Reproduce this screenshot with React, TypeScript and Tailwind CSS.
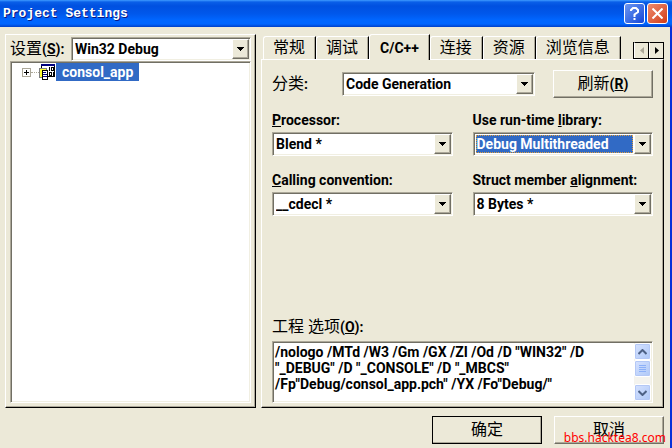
import React, { useState } from "react";

const sunken =
  "border border-t-[#aca899] border-l-[#aca899] border-b-white border-r-white bg-white p-px shadow-[inset_1px_1px_0_#716f64,inset_-1px_-1px_0_#f1efe2]";
const raised =
  "border border-t-white border-l-white border-b-[#716f64] border-r-[#716f64] bg-[#ece9d8] shadow-[inset_-1px_-1px_0_#aca899]";
const cjk = "text-base leading-6 font-normal";
const spinner =
  "flex h-4 w-[15px] items-center justify-center border-t border-l border-t-black border-l-white bg-[#ece9d8] border-r border-r-black";

function Combo({
  id,
  options,
  focused = false,
}: {
  id: string;
  options: string[];
  focused?: boolean;
}) {
  return (
    <div className={`relative flex h-6 min-w-0 flex-1 ${sunken}`}>
      <select
        id={id}
        className={`m-px min-w-0 flex-1 appearance-none text-sm leading-4 outline-none ${
          focused
            ? "border border-dotted border-[#e0a040] bg-[#316ac5] text-white"
            : "bg-white pl-px"
        }`}
      >
        {options.map((o) => (
          <option key={o}>{o}</option>
        ))}
      </select>
      <span className={`pointer-events-none flex w-[17px] items-center justify-center ${raised}`}>
        <svg width="7" height="4" viewBox="0 0 7 4" shapeRendering="crispEdges">
          <path d="M0 0h7v1H6v1H5v1H4v1H3V3H2V2H1V1H0z" />
        </svg>
      </span>
    </div>
  );
}

function Tab({
  label,
  active,
  onSelect,
}: {
  label: string;
  active: boolean;
  onSelect: () => void;
}) {
  return (
    <button
      type="button"
      role="tab"
      aria-selected={active}
      onClick={onSelect}
      className={`rounded-tl-[3px] border-t border-l border-r border-t-white border-l-white border-r-black whitespace-nowrap shadow-[inset_-1px_0_0_#aca899] ${
        active
          ? "relative -mb-px h-[26px] bg-[#ece9d8] px-2.5 text-sm font-bold"
          : "h-[23px] pr-2.5 pb-px pl-[9px] text-base leading-5 font-normal"
      }`}
    >
      {label}
    </button>
  );
}

function ScrollButton({ label, children }: { label: string; children: React.ReactNode }) {
  return (
    <button
      type="button"
      aria-label={label}
      className="flex h-[17px] w-full items-center justify-center rounded-xs border border-white bg-linear-to-br from-[#d6e2ff] to-[#aec8f7] shadow-[inset_0_0_0_1px_#b4c8f6]"
    >
      {children}
    </button>
  );
}

function ProjectIcon() {
  return (
    <svg width="16" height="16" viewBox="0 0 16 16" shapeRendering="crispEdges">
      <path d="M2 0h14v13H2z" fill="#000" />
      <path d="M3 2h12v10H3z" fill="#fff" />
      <path d="M2 0h14v2H2z" fill="#000080" />
      <path d="M0 4h8v10H0z" fill="#808080" />
      <path d="M1 5h6v8H1z" fill="#ffff33" />
      <path d="M3 6h6v10H3z" fill="#000" />
      <path d="M4 7h4v8H4z" fill="#fff" />
      <path d="M4 8h3v1H4zM4 10h4v1H4zM4 12h4v1H4z" fill="#000080" />
      <path d="M10 3h1v4h-1zM12 3h3v4h-3zM13 4v2h1V4zM10 8h3v4h-3zM11 9v2h1V9zM14 8h1v4h-1z" fillRule="evenodd" />
    </svg>
  );
}

const tabs = ["常规", "调试", "C/C++", "连接", "资源", "浏览信息"];

const initialOptions = `/nologo /MTd /W3 /Gm /GX /ZI /Od /D "WIN32" /D
"_DEBUG" /D "_CONSOLE" /D "_MBCS"
/Fp"Debug/consol_app.pch" /YX /Fo"Debug/"`;

export default function App() {
  const [tab, setTab] = useState("C/C++");
  const [text, setText] = useState(initialOptions);

  return (
    <div className="flex min-h-screen flex-col bg-[#ece9d8] font-[Roboto,'Noto_Sans_CJK_SC',sans-serif] text-sm font-bold text-black">
      <header className="flex h-[27px] items-center justify-between bg-[linear-gradient(#3f9bff_0,#0a5fe8_2px,#0050e0_6px,#0058ec_14px,#0066ff_20px,#0066ff_24px,#0040c8_27px)] pr-1 pl-[3px]">
        <h1 className="pt-0.5 font-['Liberation_Mono',monospace] text-[13px] font-bold text-white [text-shadow:1px_1px_0_#0a1883]">
          Project Settings
        </h1>
        <div className="flex gap-0.5">
          <button
            type="button"
            aria-label="Help"
            className="flex size-[21px] items-center justify-center rounded-[3px] border border-white bg-linear-to-br from-[#6d96f0] to-[#1443d8]"
          >
            <svg width="11" height="13" viewBox="0 0 11 13" fill="none" stroke="#fff" strokeWidth="2">
              <path d="M2 4V3L4 1h3l2 2v2L5.500 7.500V10M5.500 11v2" />
            </svg>
          </button>
          <button
            type="button"
            aria-label="Close"
            className="flex size-[21px] items-center justify-center rounded-[3px] border border-white bg-linear-to-br from-[#ee8a6c] to-[#d03a10]"
          >
            <svg width="11" height="11" viewBox="0 0 11 11" stroke="#fff" strokeWidth="2">
              <path d="M0.500 0.500l10 10M10.500 0.500l-10 10" />
            </svg>
          </button>
        </div>
      </header>

      <div className="flex flex-1 flex-col border-r-2 border-[#0831d9] pr-1.5 pb-1 pl-[5px]">
        <main className="flex flex-1 gap-[5px] pt-[7px]">
          <section className="flex w-[251px] shrink-0 flex-col border border-t-white border-r-black border-b-black border-l-white px-1 pt-0.5 pb-1 shadow-[inset_-1px_-1px_0_#aca899]">
            <div className="flex items-center">
              <label htmlFor="config" className={`w-[61px] ${cjk}`}>
                设置<span className="text-sm font-bold">(<u>S</u>):</span>
              </label>
              <Combo id="config" options={["Win32 Debug", "Win32 Release"]} />
            </div>
            <div role="tree" aria-label="Projects" className={`flex-1 ${sunken}`}>
              <div role="treeitem" aria-selected="true" className="flex items-center pl-2.5">
                <button
                  type="button"
                  aria-label="Expand"
                  className="flex size-[9px] items-center justify-center border border-[#aca899]"
                >
                  <svg width="5" height="5" viewBox="0 0 5 5" shapeRendering="crispEdges">
                    <path d="M2 0h1v2h2v1H3v2H2V3H0V2h2z" />
                  </svg>
                </button>
                <span className="w-2 border-t border-dotted border-[#aca899]" />
                <ProjectIcon />
                <span className="ml-px bg-[#316ac5] px-1.5 text-sm leading-[18px] text-white">consol_app</span>
              </div>
            </div>
          </section>

          <section className="flex min-w-0 flex-1 flex-col">
            <div className="flex h-[25px] items-end pl-0.5">
              <div role="tablist" className="flex items-end">
                {tabs.map((t) => (
                  <Tab key={t} label={t} active={t === tab} onSelect={() => setTab(t)} />
                ))}
              </div>
              <div className="ml-auto flex border-b border-l border-black">
                <button type="button" aria-label="Previous tabs" className={spinner}>
                  <svg width="4" height="7" viewBox="0 0 4 7" fill="#aca899"><path d="M4 0v7L0 3.500z" /></svg>
                </button>
                <button type="button" aria-label="More tabs" className={spinner}>
                  <svg width="4" height="7" viewBox="0 0 4 7"><path d="M0 0v7l4-3.500z" /></svg>
                </button>
              </div>
            </div>

            <div className="flex flex-1 flex-col border border-t-white border-r-black border-b-black border-l-white px-2.5 pt-2.5 pb-1 shadow-[inset_-1px_-1px_0_#aca899]">
              <div className="flex items-center">
                <label htmlFor="category" className={`w-[70px] ${cjk}`}>
                  分类<span className="text-sm font-bold">:</span>
                </label>
                <Combo id="category" options={["Code Generation", "General"]} />
                <button type="button" className={`ml-[18px] h-7 w-[100px] ${raised} ${cjk}`}>
                  刷新<span className="text-sm font-bold">(<u>R</u>)</span>
                </button>
              </div>

              <div className="mt-3.5 grid grid-cols-2 gap-x-5 gap-y-4">
                <div className="flex flex-col">
                  <label htmlFor="processor" className="h-5 leading-4"><u>P</u>rocessor:</label>
                  <div className="flex"><Combo id="processor" options={["Blend *"]} /></div>
                </div>
                <div className="flex flex-col">
                  <label htmlFor="runtime" className="h-5 leading-4">Use run-time <u>l</u>ibrary:</label>
                  <div className="flex"><Combo id="runtime" options={["Debug Multithreaded"]} focused /></div>
                </div>
                <div className="flex flex-col">
                  <label htmlFor="calling" className="h-5 leading-4"><u>C</u>alling convention:</label>
                  <div className="flex"><Combo id="calling" options={["__cdecl *"]} /></div>
                </div>
                <div className="flex flex-col">
                  <label htmlFor="alignment" className="h-5 leading-4">Struct member <u>a</u>lignment:</label>
                  <div className="flex"><Combo id="alignment" options={["8 Bytes *"]} /></div>
                </div>
              </div>

              <label htmlFor="options" className={`mt-auto pt-4 pb-0.5 ${cjk}`}>
                工程 选项<span className="text-sm font-bold">(<u>O</u>):</span>
              </label>
              <div className={`flex h-[62px] ${sunken}`}>
                <textarea
                  id="options"
                  value={text}
                  onChange={(e) => setText(e.target.value)}
                  className="min-w-0 flex-1 resize-none overflow-hidden pt-px pl-px text-sm leading-4 whitespace-pre outline-none"
                />
                <div className="flex w-[17px] flex-col bg-[#f4f3ee]">
                  <ScrollButton label="Scroll up">
                    <svg width="9" height="6" viewBox="0 0 9 6" fill="none" stroke="#4d6185" strokeWidth="2"><path d="M0.500 5l4-4 4 4" /></svg>
                  </ScrollButton>
                  <ScrollButton label="Scroll position">
                    <svg width="7" height="8" viewBox="0 0 7 8" stroke="#8cb0f8" shapeRendering="crispEdges"><path d="M0 .5h7M0 2.500h7M0 4.500h7M0 6.500h7" /></svg>
                  </ScrollButton>
                  <div className="flex-1" />
                  <ScrollButton label="Scroll down">
                    <svg width="9" height="6" viewBox="0 0 9 6" fill="none" stroke="#4d6185" strokeWidth="2"><path d="M0.500 1l4 4 4-4" /></svg>
                  </ScrollButton>
                </div>
              </div>
            </div>
          </section>
        </main>

        <footer className="relative flex justify-end gap-3 pt-2">
          <button type="button" className={`h-7 w-[110px] outline -outline-offset-1 outline-black ${raised} ${cjk}`}>
            确定
          </button>
          <button type="button" className={`h-7 w-[110px] ${raised} ${cjk}`}>
            取消
          </button>
          <span className="absolute -right-0.5 -bottom-0.5 font-['Noto_Sans',sans-serif] text-xs font-normal text-[#ff0000]">
            bbs.hacktea8.com
          </span>
        </footer>
      </div>
    </div>
  );
}
